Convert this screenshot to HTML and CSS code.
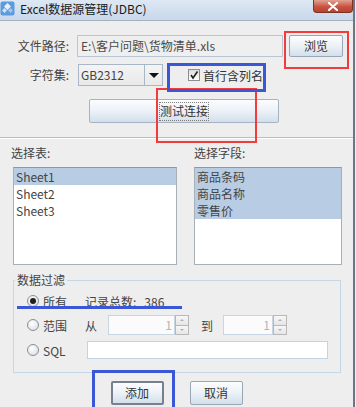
FILE: index.html
```html
<!DOCTYPE html>
<html lang="zh-CN">
<head>
    <meta charset="UTF-8">
    <title>Excel数据源管理(JDBC)</title>
    <link rel="stylesheet" href="styles.css">
</head>
<body>
    <div class="window">
        <div class="titlebar">
            <svg class="app-icon" width="15" height="15" viewBox="0 0 15 15">
                <rect x="0.5" y="0.5" width="14" height="14" rx="2" fill="#5b9be0"/>
                <path d="M7.5 2 L11 5.5 L7.5 9 L4 5.5 Z" fill="#ffffff" opacity="0.85"/>
                <path d="M4.5 7 L7 9.5 L4.5 12 L2 9.5 Z" fill="#cfe3f8"/>
                <path d="M10.5 7 L13 9.5 L10.5 12 L8 9.5 Z" fill="#9ec6ef"/>
            </svg>
            <span class="title">Excel数据源管理(JDBC)</span>
            <div class="close">
                <svg width="12" height="9" viewBox="0 0 12 9">
                    <path d="M2 1 L10 8 M10 1 L2 8" stroke="#ffffff" stroke-width="2.2" stroke-linecap="round"/>
                </svg>
            </div>
        </div>

        <div class="conn">
            <div class="row row-path">
                <span class="label">文件路径:</span>
                <div class="field field-path">E:\客户问题\货物清单.xls</div>
                <button class="btn btn-browse">浏览</button>
            </div>
            <div class="row row-charset">
                <span class="label">字符集:</span>
                <div class="combo">
                    <span class="combo-text">GB2312</span>
                    <span class="combo-btn"><span class="arrow-down"></span></span>
                </div>
                <label class="check">
                    <span class="check-box">
                        <svg width="10" height="10" viewBox="0 0 10 10">
                            <path d="M2 5 L4 8 L8.5 1.5" stroke="#222" stroke-width="1.6" fill="none"/>
                        </svg>
                    </span>
                    首行含列名
                </label>
            </div>
            <div class="row row-test">
                <button class="btn btn-test"><span class="focus">测试连接</span></button>
            </div>
        </div>

        <div class="separator"></div>

        <div class="lists">
            <div class="list-col col-table">
                <div class="list-label label-table">选择表:</div>
                <ul class="list">
                    <li class="selected">Sheet1</li>
                    <li>Sheet2</li>
                    <li>Sheet3</li>
                </ul>
            </div>
            <div class="list-col col-field">
                <div class="list-label">选择字段:</div>
                <ul class="list">
                    <li class="selected">商品条码</li>
                    <li class="selected">商品名称</li>
                    <li class="selected">零售价</li>
                </ul>
            </div>
        </div>

        <fieldset class="filter">
            <legend>数据过滤</legend>
            <div class="frow frow-all">
                <span class="radio checked"></span>
                <span class="rtext">所有</span>
                <span class="count">记录总数:</span>
                <span class="total">386</span>
            </div>
            <div class="frow frow-range">
                <span class="radio"></span>
                <span class="rtext">范围</span>
                <span class="from">从</span>
                <div class="spinner spin-from">
                    <span class="spin-value">1</span>
                    <span class="spin-btns">
                        <span class="spin-up"><span class="arrow-up"></span></span>
                        <span class="spin-down"><span class="arrow-dn"></span></span>
                    </span>
                </div>
                <span class="to">到</span>
                <div class="spinner spin-to">
                    <span class="spin-value">1</span>
                    <span class="spin-btns">
                        <span class="spin-up"><span class="arrow-up"></span></span>
                        <span class="spin-down"><span class="arrow-dn"></span></span>
                    </span>
                </div>
            </div>
            <div class="frow frow-sql">
                <span class="radio"></span>
                <span class="rtext rtext-sql">SQL</span>
                <div class="field field-sql"></div>
            </div>
        </fieldset>

        <div class="actions">
            <button class="btn btn-add">添加</button>
            <button class="btn btn-cancel">取消</button>
        </div>

        <!-- annotation marks drawn over the dialog -->
        <div class="mark red mark-browse"></div>
        <div class="mark red mark-test"></div>
        <div class="mark blue mark-check"></div>
        <div class="mark blue mark-add"></div>
        <div class="underline"></div>
    </div>
</body>
</html>
```

FILE: styles.css
```css
body {
    margin: 0;
    background-color: #eeeeee;
    font-family: "Noto Sans CJK SC", "Noto Sans", sans-serif;
    font-size: 12px;
    color: #444444;
    overflow: hidden;
}
.window {
    position: relative;
    width: 353px;
    height: 407px;
    background-color: #eeeeee;
    border-right: 2px solid #6b7786;
}
.titlebar {
    height: 20px;
    display: flex;
    align-items: center;
    background: linear-gradient(#dde8f4, #c8d7ea);
    border-bottom: 1px solid #a3b1c1;
    position: relative;
}
.app-icon {
    margin-top: -3px;
}
.title {
    margin-left: 5px;
    margin-top: -3px;
    color: #1a1a1a;
    line-height: 16px;
}
.close {
    position: absolute;
    right: 0;
    top: 0;
    width: 40px;
    height: 13px;
    display: flex;
    align-items: center;
    justify-content: center;
    background: linear-gradient(#e2a191, #c75443 55%, #b8402f);
    border: 1px solid #7d3024;
    border-top: none;
    border-radius: 0 0 4px 4px;
    box-sizing: border-box;
}

.conn {
    padding-top: 14px;
}
.row {
    display: flex;
    align-items: center;
}
.label {
    width: 69px;
    text-align: right;
    line-height: 16px;
}
.row-path {
    height: 22px;
}
.field {
    box-sizing: border-box;
    border: 1px solid #b9c9da;
    background-color: #f0f0f0;
    line-height: 18px;
}
.field-path {
    margin-left: 8px;
    width: 206px;
    height: 22px;
    padding: 1px 3px;
    color: #4a4a4a;
    background-color: #efefef;
    border-color: #b7c6d6;
}
.btn {
    box-sizing: border-box;
    font-family: "Noto Sans CJK SC", sans-serif;
    font-size: 12px;
    color: #333333;
    padding: 0;
    border: 1px solid #98a6b5;
    border-radius: 2px;
    background: linear-gradient(#fbfcfe, #eef3f8 45%, #d2dfeb);
    line-height: 16px;
}
.btn-browse {
    margin-left: 6px;
    width: 54px;
    height: 22px;
}
.row-charset {
    margin-top: 7px;
    height: 22px;
}
.combo {
    margin-left: 9px;
    width: 85px;
    height: 22px;
    box-sizing: border-box;
    display: flex;
    border: 1px solid #a9b8c8;
    background: linear-gradient(#f4f4f4, #e9e9e9);
}
.combo-text {
    flex: 1;
    padding-left: 2px;
    line-height: 19px;
}
.combo-btn {
    width: 17px;
    border-left: 1px solid #a9b8c8;
    display: flex;
    align-items: center;
    justify-content: center;
}
.arrow-down {
    width: 0;
    height: 0;
    border-left: 5px solid transparent;
    border-right: 5px solid transparent;
    border-top: 5px solid #111111;
}
.check {
    margin-left: 25px;
    display: flex;
    align-items: center;
    color: #333333;
}
.check-box {
    width: 12px;
    height: 12px;
    box-sizing: border-box;
    border: 1px solid #8c8f92;
    background: linear-gradient(#dcdcdc, #ffffff);
    display: flex;
    align-items: center;
    justify-content: center;
    margin-right: 3px;
}
.row-test {
    margin-top: 13px;
}
.btn-test {
    margin-left: 89px;
    width: 190px;
    height: 24px;
    border-color: #a6b3c1;
}
.focus {
    display: inline-block;
    border: 1px dotted #7d7d7d;
    padding: 0 0 1px;
    line-height: 16px;
}

.separator {
    margin-top: 14px;
    height: 1px;
    background-color: #a9bfdb;
    border-bottom: 1px solid #ffffff;
}

.lists {
    display: flex;
    padding-left: 13px;
    gap: 17px;
}
.list-col {
    display: flex;
    flex-direction: column;
}
.col-table {
    width: 164px;
}
.col-field {
    width: 148px;
}
.list-label {
    margin-top: 6px;
    line-height: 16px;
}
.label-table {
    margin-left: -2px;
}
.list {
    margin: 6px 0 0;
    padding: 0;
    list-style: none;
    height: 98px;
    box-sizing: border-box;
    background-color: #ffffff;
    border: 1px solid #a7afb8;
    border-top-color: #8f979f;
}
.list li {
    height: 17px;
    line-height: 17px;
    padding-left: 2px;
}
.list li.selected {
    background-color: #b8cde4;
}

.filter {
    margin: 7px 0 0 13px;
    width: 328px;
    box-sizing: border-box;
    padding: 0 0 13px 13px;
    border: 1px solid #c6d6e7;
}
.filter legend {
    padding: 0 2px;
    margin-left: -12px;
    line-height: 16px;
}
.frow {
    display: flex;
    align-items: center;
}
.frow-all {
    margin-top: 4px;
    height: 18px;
}
.radio {
    width: 12px;
    height: 12px;
    box-sizing: border-box;
    border-radius: 50%;
    border: 1px solid #8b8f94;
    background: radial-gradient(circle at 40% 35%, #ffffff, #d4dbe2);
    margin-right: 4px;
    display: flex;
    align-items: center;
    justify-content: center;
}
.radio.checked::after {
    content: "";
    width: 6px;
    height: 6px;
    border-radius: 50%;
    background-color: #1f1f1f;
}
.rtext {
    width: 24px;
}
.count {
    margin-left: 18px;
}
.total {
    margin-left: 8px;
}
.frow-range {
    margin-top: 5px;
    height: 20px;
}
.from {
    margin-left: 18px;
}
.spinner {
    display: flex;
    height: 20px;
    box-sizing: border-box;
}
.spin-from {
    margin-left: 11px;
    width: 81px;
}
.to {
    margin-left: 12px;
}
.spin-to {
    margin-left: 10px;
    width: 64px;
}
.spin-value {
    flex: 1;
    background-color: #fbfbfb;
    border: 1px solid #c8d5e2;
    text-align: right;
    padding-right: 2px;
    color: #b5b5b5;
    line-height: 18px;
}
.spin-btns {
    width: 14px;
    display: flex;
    flex-direction: column;
}
.spin-up,
.spin-down {
    flex: 1;
    border: 1px solid #b8b8b8;
    background: linear-gradient(#f7f7f7, #e6e6e6);
    display: flex;
    align-items: center;
    justify-content: center;
}
.spin-down {
    border-top: none;
}
.arrow-up {
    border-left: 2px solid transparent;
    border-right: 2px solid transparent;
    border-bottom: 2px solid #b0b0b0;
}
.arrow-dn {
    border-left: 2px solid transparent;
    border-right: 2px solid transparent;
    border-top: 2px solid #b0b0b0;
}
.frow-sql {
    margin-top: 6px;
    height: 18px;
}
.rtext-sql {
    width: 44px;
}
.field-sql {
    width: 241px;
    height: 18px;
    background-color: #ffffff;
    border-color: #c3d3e4;
}

.actions {
    margin-top: 8px;
    display: flex;
    justify-content: center;
    gap: 26px;
}
.btn-add,
.btn-cancel {
    width: 53px;
    height: 24px;
}
.btn-add {
    border: 2px solid #76818d;
}

.mark {
    position: absolute;
    box-sizing: border-box;
}
.red {
    border: 2px solid #f23b3b;
}
.blue {
    border: 3px solid #3a58d6;
}
.mark-browse {
    left: 284px;
    top: 31px;
    width: 65px;
    height: 38px;
}
.mark-test {
    left: 156px;
    top: 88px;
    width: 101px;
    height: 55px;
}
.mark-check {
    left: 167px;
    top: 63px;
    width: 99px;
    height: 29px;
}
.mark-add {
    left: 92px;
    top: 370px;
    width: 83px;
    height: 45px;
}
.underline {
    position: absolute;
    left: 17px;
    top: 306px;
    width: 165px;
    height: 3px;
    background-color: #3a58d6;
}
```
